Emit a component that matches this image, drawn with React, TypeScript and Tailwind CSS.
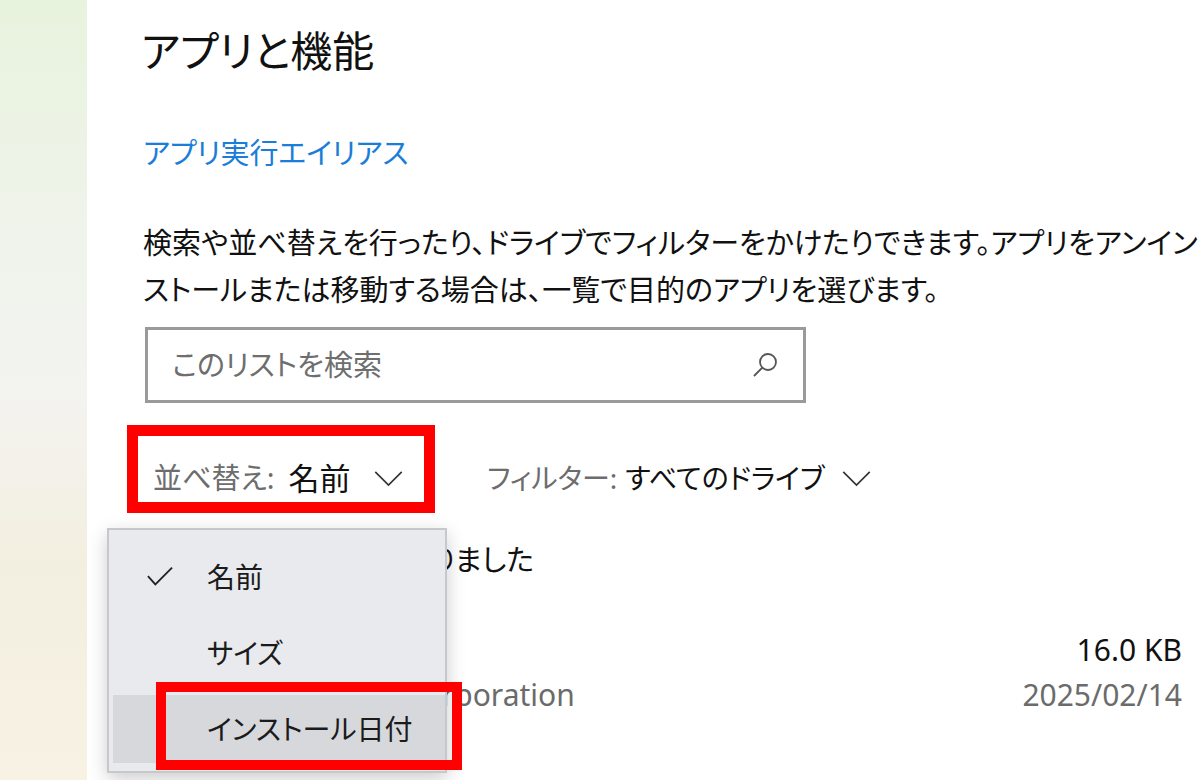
import React from 'react';

const Chevron = ({ className }: { className?: string }) => (
  <svg viewBox="0 0 32 18" className={className} fill="none" stroke="currentColor" strokeWidth={1.8}>
    <polyline points="2,2 16,16 30,2" />
  </svg>
);

const SearchIcon = () => (
  <svg viewBox="0 0 28 28" className="w-[28px] h-[28px] text-[#555]" fill="none" stroke="currentColor" strokeWidth={1.8}>
    <circle cx="17" cy="11" r="8" />
    <line x1="11.3" y1="16.7" x2="3" y2="25" />
  </svg>
);

const Check = () => (
  <svg viewBox="0 0 28 22" className="w-[26px] h-[22px] text-[#222]" fill="none" stroke="currentColor" strokeWidth={2}>
    <polyline points="1,10 9,19 27,1" />
  </svg>
);

const MenuItem = ({ label, checked, active }: { label: string; checked?: boolean; active?: boolean }) => (
  <div className={`relative flex items-center h-[68px] ${active ? 'bg-[#d6d8db]' : ''}`}>
    <div className="w-[94px] pl-[34px] flex items-center">{checked && <Check />}</div>
    <span className="text-[28px] leading-[40px] text-[#1b1b1b]">{label}</span>
    {active && (
      <div className="absolute left-[43px] -top-[13px] -right-[17px] -bottom-[7px] border-[10px] border-[#ff0000]" />
    )}
  </div>
);

const AppRow = ({ name, publisher, size, date }: { name: string; publisher: string; size: string; date: string }) => (
  <div className="flex items-start gap-[26px] mb-[50px]">
    <div className="mt-[7px] w-[95px] h-[95px] shrink-0 bg-[#2a6fcf]" />
    <div className="flex-1">
      <div className="text-[30px] leading-[45px] text-[#111]">{name}</div>
      <div className="text-[30px] leading-[45px] text-[#6b6b6b]">{publisher}</div>
    </div>
    <div className="text-right">
      <div className="text-[30px] leading-[45px] text-[#111]">{size}</div>
      <div className="text-[30px] leading-[45px] text-[#6b6b6b]">{date}</div>
    </div>
  </div>
);

export default function App() {
  return (
    <div
      className="flex w-[1200px] h-[780px] overflow-hidden bg-white [font-feature-settings:'palt'] font-['Noto_Sans','Noto_Sans_CJK_JP',sans-serif]"
    >
      <div className="w-[87px] shrink-0 bg-[linear-gradient(to_bottom,#e8f3dd_0%,#f0f3ec_32%,#f3f3f0_50%,#f3efe0_72%,#f7f2e3_100%)]" />

      <main className="relative flex-1 min-w-0 pl-[56px] pt-[27px]">
        <h1 className="-ml-[2px] text-[42px] leading-[48px] font-normal text-[#111]">アプリと機能</h1>

        <div className="mt-[58px] text-[29px] leading-[40px] text-[#1a7dd7]">アプリ実行エイリアス</div>

        <p className="mt-[46px] text-[29px] leading-[47px] text-[#111] whitespace-nowrap">
          検索や並べ替えを行ったり、ドライブでフィルターをかけたりできます。アプリをアンイン
          <br />
          ストールまたは移動する場合は、一覧で目的のアプリを選びます。
        </p>

        <div className="mt-[14px] ml-[2px] w-[661px] h-[76px] border-[3px] border-[#9a9a9a] flex items-center justify-between pl-[24px] pr-[24px]">
          <span className="text-[29px] text-[#6e6e6e]">このリストを検索</span>
          <SearchIcon />
        </div>

        <div className="mt-[22px] flex items-start">
          <div className="-ml-[16px] w-[308px] h-[88px] border-[11px] border-[#ff0000] flex items-center pl-[15px] pt-[18px]">
            <span className="text-[29px] leading-[40px] text-[#6d6d6d]">並べ替え:</span>
            <span className="ml-[14px] text-[31px] leading-[40px] text-[#111]">名前</span>
            <Chevron className="ml-[22px] w-[31px] h-[17px] text-[#333]" />
          </div>
          <div className="ml-[52px] h-[88px] flex items-center pt-[18px]">
            <span className="text-[28px] leading-[40px] text-[#6d6d6d]">フィルター:</span>
            <span className="ml-[8px] text-[28px] leading-[40px] text-[#111]">すべてのドライブ</span>
            <Chevron className="ml-[17px] w-[31px] h-[17px] text-[#333]" />
          </div>
        </div>

        <div className="mt-[27px] text-[29px] leading-[40px] text-[#111]">25 個のアプリが見つかりました</div>

        <div className="mt-[47px] pr-[18px]">
          <AppRow name="3D Viewer" publisher="Microsoft Corporation" size="16.0 KB" date="2025/02/14" />
          <AppRow name="7-Zip 24.09 (x64)" publisher="Igor Pavlov" size="5.56 MB" date="2024/12/01" />
        </div>

        <div className="absolute left-[20px] top-[528px] w-[340px] border-2 border-[#c6c8cb] bg-[#e8eaed] shadow-[0_6px_18px_rgba(0,0,0,0.2)] pl-[4px] pt-[13px] pb-[8px] flex flex-col gap-[8px]">
          <MenuItem label="名前" checked />
          <MenuItem label="サイズ" />
          <MenuItem label="インストール日付" active />
        </div>
      </main>
    </div>
  );
}
